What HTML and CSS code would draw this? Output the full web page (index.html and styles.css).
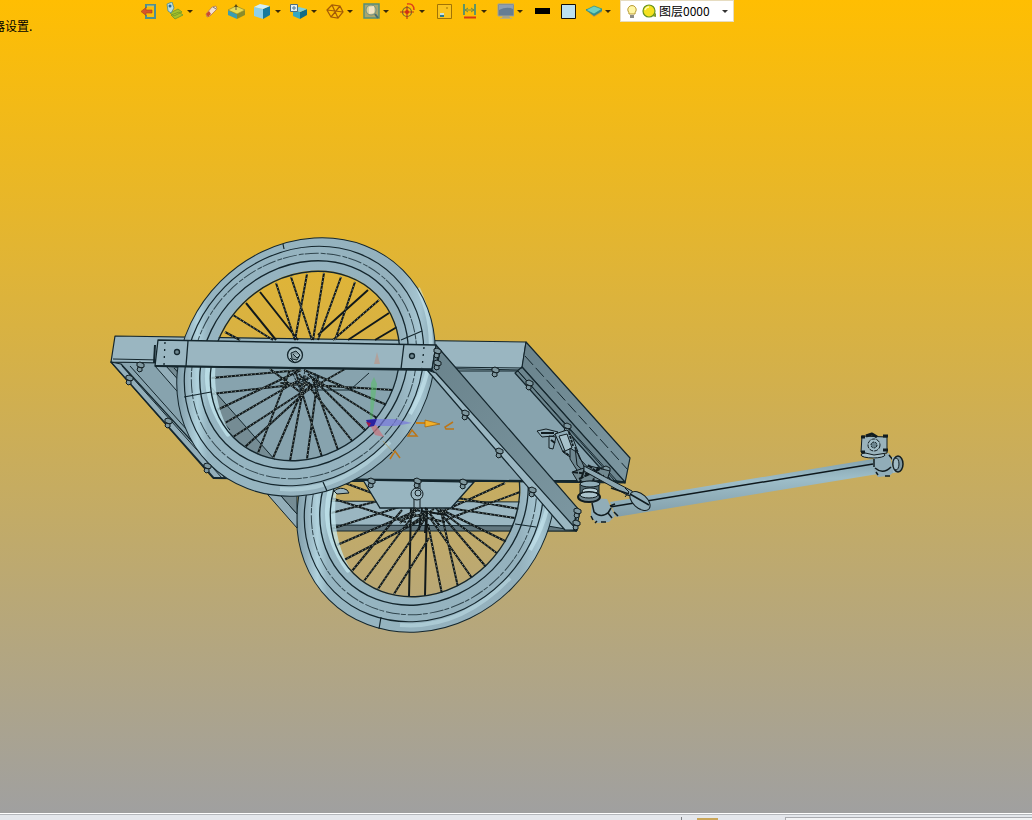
FILE: index.html
```
<!doctype html>
<html lang="zh-CN">
  <head>
    <title>图层0000</title>
    <meta charset="UTF-8">
    <meta name="viewport" content="width=device-width, initial-scale=1">
    <link rel="stylesheet" href="styles.css">
  </head>
  <body>
    <main class="viewport">
      <div class="toolbar">
        <button type="button" class="tool" aria-label="退出">
          <svg class="icon" viewBox="0 0 18 18"><path d="M6 6V3h9v13H6v-3" fill="none" stroke="#4f8f91" stroke-width="2"/><path d="M7 4h7" stroke="#b6c58a"/><path d="M1 9.500l5-4v2.500h6v3H6v2.500z" fill="#d8542a" stroke="#a8441a" stroke-width=".6"/></svg>
        </button>
        <button type="button" class="tool menu" aria-label="网格">
          <svg class="icon" viewBox="0 0 18 18"><path d="M5 13l8-3 4 3-8 4zM4 11l8-4 4 3-8 4z" fill="#a6c22b" stroke="#6f9429" stroke-width=".8"/><path d="M1 2l5-2 2 6-3 5-3-2z" fill="#b9dde2" stroke="#4b8b93" stroke-width=".8"/><circle cx="4" cy="4" r="1.500" fill="#2c6691"/></svg>
        </button>
        <button type="button" class="tool" aria-label="擦除">
          <svg class="icon" viewBox="0 0 18 18"><path d="M4 12l6-7 4-1 1 3-7 7-3 1z" fill="#f3dfcf" stroke="#b77c48" stroke-width=".8"/><path d="M4 12l3-3 2 3-3 3z" fill="#cb4b2b"/><path d="M11 5l3 2" stroke="#777"/></svg>
        </button>
        <button type="button" class="tool" aria-label="拉伸">
          <svg class="icon" viewBox="0 0 18 18"><path d="M0 8l9 4v5l-9-4z" fill="#3a9db2"/><path d="M9 12l8-4v5l-8 4z" fill="#8b8c2a"/><path d="M0 8l8-4 9 4-8 4z" fill="#e9dc52" stroke="#8b8a2c" stroke-width=".7"/><path d="M8 8V4" stroke="#555"/><path d="M8 2l-2 3h4z" fill="#5b4c12"/></svg>
        </button>
        <button type="button" class="tool menu" aria-label="着色">
          <svg class="icon" viewBox="0 0 18 18"><path d="M0 5l9 2v10l-9-3z" fill="#8ed0e9"/><path d="M9 7l7-3v9l-7 4z" fill="#17799c"/><path d="M0 5l6-3 10 2-7 3z" fill="#d2effa"/></svg>
        </button>
        <button type="button" class="tool menu" aria-label="视图">
          <svg class="icon" viewBox="0 0 18 18"><path d="M3 7l7 3v7l-7-3z" fill="#35a7c4"/><path d="M10 10l7-3v6l-7 4z" fill="#126c86"/><path d="M3 7l6-2 8 2-7 3z" fill="#7ed0dd"/><path d="M.500 2.500h7v7h-7z" fill="#e5f0f5" stroke="#4c6f81"/><path d="M4 4v4M2 6h4" stroke="#507d96"/></svg>
        </button>
        <button type="button" class="tool menu" aria-label="线框">
          <svg class="icon" viewBox="0 0 18 18"><path d="M1 8l5-5 8 1 3 6-5 6-7-1zM1 8l16 2M6 3l6 13M14 4L5 15M1 8l8 1" fill="none" stroke="#a35a07" stroke-width="1.200"/></svg>
        </button>
        <button type="button" class="tool menu" aria-label="缩放">
          <svg class="icon" viewBox="0 0 18 18"><path d="M2 2h15v14H2z" fill="#a9a66d" stroke="#568e7c" stroke-width="1.500"/><circle cx="9" cy="8" r="5" fill="#d7cf9b" stroke="#708f85"/><path d="M7 5l5-1v7l-5 1z" fill="#f2e2c2"/><path d="M13 12l3 4" stroke="#456b72" stroke-width="2"/></svg>
        </button>
        <button type="button" class="tool menu" aria-label="定位">
          <svg class="icon" viewBox="0 0 18 18"><circle cx="9" cy="10" r="4.500" fill="none" stroke="#6e6a32" stroke-width="1.200"/><path d="M2 10h14M9 4v13" stroke="#c13b16" stroke-width="1.200"/><circle cx="9" cy="10" r="2" fill="#d12d16"/><path d="M9 2q7-1 7 6" fill="none" stroke="#dc3d1b" stroke-width="1.500"/></svg>
        </button>
        <button type="button" class="tool" aria-label="窗口">
          <svg class="icon" viewBox="0 0 18 18"><path d="M3.500 2.500h14v14h-14z" fill="#fac31d" stroke="#a17305"/><path d="M6 11h4v4H6z" fill="#2e788c"/><path d="M6 11h4v2H6z" fill="#c9e1da"/><path d="M12 6h2" stroke="#a17305"/></svg>
        </button>
        <button type="button" class="tool menu" aria-label="标注">
          <svg class="icon" viewBox="0 0 18 18"><path d="M4 2v11M15 2v11" fill="none" stroke="#5f9468" stroke-width="2"/><path d="M5 8h9M8 6L5 8l3 2M11 6l3 2-3 2" fill="none" stroke="#6d8848"/><path d="M4 15.500h12" stroke="#d63b15" stroke-width="2"/></svg>
        </button>
        <button type="button" class="tool menu" aria-label="背景">
          <svg class="icon" viewBox="0 0 18 18"><path d="M2 2h16v12H2z" fill="#667d93" stroke="#a3a59a"/><path d="M3 8q8-4 14-1V3H3z" fill="#8f9fb0"/><path d="M7 14h6l2 3H5z" fill="#a7a387"/><path d="M4 16.500h12" stroke="#c0ae70"/></svg>
        </button>
        <button type="button" class="tool" aria-label="线色">
          <svg class="icon" viewBox="0 0 18 18"><path d="M3 6h15v6H3z" fill="#000"/></svg>
        </button>
        <button type="button" class="tool" aria-label="面色">
          <svg class="icon" viewBox="0 0 18 18"><path d="M3.500 2.500h14v14h-14z" fill="#bce0f0" stroke="#161006"/></svg>
        </button>
        <button type="button" class="tool menu" aria-label="图层管理">
          <svg class="icon" viewBox="0 0 18 18"><path d="M3 9l7 6 8-5v-3z" fill="#c99a3c"/><path d="M2 8l8 6 8-5V7H2z" fill="#338f8c"/><path d="M2 8l8 4 8-5-8-3z" fill="#6ed0bf" stroke="#298d85" stroke-width=".7"/></svg>
        </button>
        <label class="layer">
          <svg class="icon" viewBox="0 0 18 18"><path d="M6 12q0-2-1-3a4.200 4.200 0 1 1 8 0q-1 1-1 3z" fill="#fff6a5" stroke="#b79a34"/><path d="M7 13h4v3H7z" fill="#8d8d86"/></svg>
          <svg class="icon" viewBox="0 0 18 18"><circle cx="8" cy="9" r="6" fill="#f5e11f" stroke="#65931e" stroke-width="1.200"/><path d="M4 8q1-3 4-3" fill="none" stroke="#fffcae" stroke-width="1.500"/><path d="M11 14l4-3v4z" fill="#7d9a2a"/></svg>
          <select class="layer-select" aria-label="图层">
            <option>图层0000</option>
          </select>
        </label>
      </div>
      <p class="prompt">器设置.</p>

      <svg class="model" viewBox="0 40 1032 773" role="img" aria-label="拖车模型">
        <defs>
          <linearGradient id="tyre" x1="0" y1="0" x2="1" y2="0">
            <stop offset="0" stop-color="#7f9ca8"/>
            <stop offset=".04" stop-color="#96b3bf"/>
            <stop offset=".08" stop-color="#b0d2dd"/>
            <stop offset=".12" stop-color="#96b5c1"/>
            <stop offset=".86" stop-color="#94b1bd"/>
            <stop offset=".94" stop-color="#a6c6d2"/>
            <stop offset="1" stop-color="#86a5b1"/>
          </linearGradient>
          <linearGradient id="side" x1="0" y1="0" x2="1" y2="1">
            <stop offset="0" stop-color="#6a838c"/>
            <stop offset="1" stop-color="#7c97a1"/>
          </linearGradient>
          <linearGradient id="tube" x1="0" y1="0" x2=".15" y2="1">
            <stop offset="0" stop-color="#7897a3"/>
            <stop offset=".45" stop-color="#9dbdc8"/>
            <stop offset="1" stop-color="#819da8"/>
          </linearGradient>

          <!-- one wheel, hub at 306,367 -->
          <g id="wheel">
            <path fill="url(#tyre)" fill-rule="evenodd" d="M403 270A136 120 -45 0 1 209 464A136 120 -45 0 1 403 270zM377 294A101 88 -45 0 1 233 438A101 88 -45 0 1 377 294z"/>
            <path d="M210 355Q200 395 228 434Q208 400 214 355z" fill="#d0f1f7" stroke="#c4e8f0" stroke-width="5" stroke-linejoin="round" opacity=".75"/>
            <path d="M418 288Q447 350 410 414" fill="none" stroke="#c9e9f1" stroke-width="4" opacity=".6"/>
            <path d="M280 489Q340 494 390 442" fill="none" stroke="#c2e1ea" stroke-width="4" opacity=".5"/>
            <g fill="none" stroke="#14262d">
              <ellipse cx="306" cy="367" rx="137" ry="121" transform="rotate(-45 306 367)"/>
              <ellipse cx="304" cy="366" rx="127" ry="112" transform="rotate(-45 304 366)" stroke-width="1.200"/>
              <ellipse cx="304" cy="366" rx="119" ry="106" transform="rotate(-45 304 366)" stroke="#32474f" stroke-dasharray="14 2 5 1"/>
              <ellipse cx="304" cy="365" rx="111" ry="97" transform="rotate(-45 304 365)" stroke-width="1.300"/>
              <ellipse cx="305" cy="366" rx="101" ry="88" transform="rotate(-45 305 366)" stroke-width="1.300"/>
            </g>
          </g>

          <g id="bolt" fill="#7e979f" stroke="#111c20">
            <path d="M-3-3l3-1 4 2v3l-3 1-4-2z"/>
            <path d="M-2 1l4 1v3l-3 1-2-2z"/>
          </g>
        </defs>

        <!-- rear cross beam -->
        <g stroke="#14262d" stroke-linejoin="round">
          <path d="M300 501L536 502 577 526V531L320 530z" fill="#9ab6c1"/>
          <path d="M325 525L548 526 577 531H330z" fill="#62777f"/>
        </g>

        <!-- lower wheel -->
        <path class="spoke" d="M331 513l59-15M331 529l93-30M337 545l81-35M344 560l83-43M352 571l50-61M364 581l51-68M378 589l49-73M394 594l35-56M409 597l2-91M425 596l2-90M442 594l-14-70M458 587l-18-80M472 578l-42-60M487 568l-52-61M498 554l-57-43M507 542l-65-32M515 518l-80-12M520 492l-75 28M519 509l-100-18M331 498l75 24M345 483l75 28M505 483l-68 31"/>
        <path class="twist" d="M331 513l59-15M331 529l93-30M337 545l81-35M344 560l83-43M352 571l50-61M364 581l51-68M378 589l49-73M394 594l35-56M442 594l-14-70M458 587l-18-80M472 578l-42-60M487 568l-52-61M498 554l-57-43M507 542l-65-32M515 518l-80-12M520 492l-75 28M519 509l-100-18M331 498l75 24M345 483l75 28M505 483l-68 31"/>
        <use href="#wheel" x="120" y="136"/>
        <path d="M381 617l-2 12M515 524l21 3" fill="none" stroke="#14262d" stroke-width="1.200"/>

        <!-- platform -->
        <g stroke="#14262d" stroke-linejoin="round" stroke-width="1.200">
          <path d="M111 362L522 367 625 483 213 478z" fill="#87a3ae"/>
          <path d="M115 336L526 342 522 370 111 362z" fill="#9ab6c1"/>
          <path d="M526 342L630 458 625 483 522 367z" fill="url(#side)"/>
          <path d="M111 362l103 116 12 .500L121 364z" fill="#93aeb9"/>
          <path d="M522 367l103 115-14-2L515 373z" fill="#6c858e"/>
          <path d="M440 367l82 1M440 371h78l96 109M518 371L617 481M113 359l48 1" fill="none" stroke-width="1"/>
          <path d="M525 356L628 470" fill="none" stroke-dasharray="12 4" stroke-width="1"/>
          <path d="M213 478l412 4M350 481h240" fill="none" stroke-width="2"/>
        </g>

        <!-- hub bracket -->
        <path d="M363 480L474 482 451 508H380z" fill="#98b5c0" stroke="#14262d" stroke-width="1.300"/>
        <g fill="#9bb5bf" stroke="#111c20">
          <path d="M415 484h5v6h-5zM414 499h6v9h-6z"/>
          <circle cx="417" cy="494" r="6"/>
          <circle cx="418" cy="493" r="3"/>
          <path d="M334 491q6-5 13-1l2 3-12 1z"/>
        </g>
        <path class="spoke" d="M400 523l16-15M408 526l26-17M419 530l3-22M440 526l-15-18M410 514l35 8M433 511l-32 9M447 515l-26-4M427 509l-2 24"/>
        <path class="twist" d="M400 523l16-15M408 526l26-17M440 526l-15-18M410 514l35 8M433 511l-32 9"/>

        <!-- left rail -->
        <g stroke="#14262d" stroke-linejoin="round">
          <path d="M155 366H167L297 514V528z" fill="#93aeb9"/>
          <path d="M166 366L195 369 297 485V514z" fill="#758c94"/>
          <path d="M174 368L230 430M122 366L222 478M130 366l100 112" fill="none"/>
        </g>

        <!-- upper wheel -->
        <path class="spoke" d="M225 332l15 8M233 315l40 25M246 303l30 37M260 292l38 48M276 283l19 57M291 277l21 63M307 274l-12 66M324 273l-11 67M341 277l-23 63M355 282l-20 58M368 290l-50 45M379 300l-46 40M389 313l-41 27M397 327l-22 13M211 378l89-8M211 394l99-11M217 410l84-40M225 423l81-47M233 437l77-50M245 447l68-62M258 453l32-83M273 458l35-81M290 461l15-83M307 459l11-82M322 457l-26-84M338 450l-26-73M353 442l-54-68M367 432l-59-58M377 418l-64-40M387 405l-83-35M393 390l-113-7M270 369l30 23M345 369l-40 23"/>
        <path class="twist" d="M225 332l15 8M233 315l40 25M276 283l19 57M291 277l21 63M307 274l-12 66M324 273l-11 67M341 277l-23 63M355 282l-20 58M379 300l-46 40M211 378l89-8M211 394l99-11M217 410l84-40M225 423l81-47M233 437l77-50M245 447l68-62M258 453l32-83M273 458l35-81M290 461l15-83M307 459l11-82M322 457l-26-84M338 450l-26-73M353 442l-54-68M367 432l-59-58M377 418l-64-40M387 405l-83-35M393 390l-113-7M270 369l30 23M345 369l-40 23"/>
        <path d="M293 374l8 18M305 371l-5 21M315 373l3 17M296 384l22-9M298 378l22 10" fill="none" stroke="#17262c" stroke-dasharray="3 1"/>
        <path d="M313 390h37l19-17" fill="none" stroke="#14262d"/>
        <use href="#wheel"/>
        <path d="M184 397l27-5M323 482l4 9M401 340l21-9M283 244l1 5" fill="none" stroke="#14262d" stroke-width="1.200"/>

        <!-- front cross beam -->
        <g stroke="#14262d" stroke-linejoin="round" stroke-width="1.300">
          <path d="M158 340L436 345 432 369 155 366z" fill="#9ab6c1"/>
          <path d="M155 366l277 4" stroke-width="2"/>
          <path d="M188 341l-2 25M404 344l-3 25" fill="none"/>
          <path d="M165 342l-1 23M424 347l-2 21" fill="none" stroke-dasharray="2 5"/>
          <circle cx="177" cy="352" r="2.500" fill="#718992"/>
          <circle cx="412" cy="356" r="2.500" fill="#718992"/>
          <circle cx="295" cy="355" r="7.500" fill="#a5bdc5"/>
          <path d="M291 353l5-2 4 4-3 5-5-1zM293 354l4 4 3-3M290 358l4 4" fill="#82979e" stroke-width="1"/>
        </g>

        <!-- right rail -->
        <g stroke="#14262d" stroke-linejoin="round" stroke-width="1.200">
          <path d="M436 345L580 511 576 531 432 370z" fill="url(#side)"/>
          <path d="M427 370L436 373 577 530H565z" fill="#9ab6c1"/>
          <path d="M436 349l3 5-3 16M577 508l-3 22" fill="none" stroke-width="2"/>
        </g>
        <use href="#bolt" x="437" y="352"/>
        <use href="#bolt" x="437" y="364"/>
        <use href="#bolt" x="465" y="414"/>
        <use href="#bolt" x="499" y="452"/>
        <use href="#bolt" x="532" y="491"/>
        <use href="#bolt" x="577" y="512"/>
        <use href="#bolt" x="576" y="524"/>
        <use href="#bolt" x="495" y="371"/>
        <use href="#bolt" x="529" y="384"/>
        <use href="#bolt" x="567" y="427"/>
        <use href="#bolt" x="606" y="470"/>
        <use href="#bolt" x="140" y="366"/>
        <use href="#bolt" x="129" y="379"/>
        <use href="#bolt" x="168" y="422"/>
        <use href="#bolt" x="207" y="467"/>
        <use href="#bolt" x="371" y="482"/>
        <use href="#bolt" x="417" y="482"/>
        <use href="#bolt" x="463" y="483"/>
        <path d="M155 345l-1 18" fill="none" stroke="#14262d" stroke-width="2"/>

        <!-- draw bar -->
        <path d="M610 502L873 459 878 474 616 517z" fill="url(#tube)"/>
        <path d="M610 507L873 464" fill="none" stroke="#0e181c" stroke-width="1.500"/>
        <g stroke="#111c20" fill="#91adb8" stroke-linejoin="round">
          <path d="M592 498l15 1 8 17-6 6-12 1-6-6z" stroke="none"/>
          <path d="M592 503l2 9q7 7 15 0M591 516l2 4M597 521l-2 2M601 522h5M611 508l-3 5 4 5M610 506l5-2M614 512l4 4" fill="none" stroke-width="1.500"/>
          <path d="M537 431l9-2 12 3-5 4-11 1zM549 436l7 1-3 12-4-1z"/>
          <path d="M541 433h13M551 440l4 3" fill="none" stroke-width="2"/>
          <path d="M555 434l12-4 5 6 6 16-8 5-7-5z"/>
          <path d="M559 436l8-2 5 14-7 3z" fill="#a8c2cb"/>
          <path d="M569 432l4 14M563 451l8 6 6-5" fill="none" stroke-width="2" stroke-dasharray="3 1"/>
          <path d="M570 448l8 5 8 18-6 4-10-16zM575 447l5 12 16 17-3 4-16-15z" fill="#6f8790"/>
          <path d="M572 472l18-6 20 5-3 9-29 2z" fill="#71888f"/>
          <path d="M573 472l31 4M579 479l23-11M588 465l19 15M585 468l-5 14M598 467l-5 14" fill="none" stroke-width="2" stroke-dasharray="5 1"/>
          <path d="M584 466l48 25 3 6-8-2-43-24z" fill="#8ca6b0"/>
          <path d="M580 484h19v10h-19z" fill="#536970"/>
          <ellipse cx="590" cy="484" rx="10" ry="3"/>
          <ellipse cx="590" cy="491" rx="8" ry="3" fill="#b9d0d7"/>
          <ellipse cx="589" cy="497" rx="11" ry="5" fill="#718790" stroke-width="2"/>
          <ellipse cx="589" cy="495" rx="9" ry="3" fill="#aac3cc"/>
          <ellipse cx="640" cy="501" rx="12" ry="7" transform="rotate(42 640 501)"/>
          <path d="M630 494l19 11M611 488l18 6" stroke-width="1.500"/>
          <path d="M625 488l4 4-4 5" fill="none"/>
        </g>

        <!-- hitch plate -->
        <g stroke="#111c20" fill="#91adb8" stroke-linejoin="round">
          <path d="M874 457l15-4 5 19-5 4-11 1-4-6z" stroke="none"/>
          <path d="M875 468q8 7 16-1M878 475l-2-3M885 476h5M874 459v8M889 455l4 5" fill="none" stroke-width="1.500"/>
          <path d="M892 457l6-1 1 16-6 1z" fill="#a0bac4" stroke="none"/>
          <ellipse cx="898" cy="464" rx="5" ry="8" fill="#7f98a1" stroke-width="1.500"/>
          <ellipse cx="896" cy="464" rx="3" ry="6" fill="#a0bac4"/>
          <ellipse cx="873" cy="455" rx="12" ry="3" fill="#a8c1c9"/>
          <path d="M862 436l25 1v16l-13 2-13-3z" fill="#9ab3bc"/>
          <circle cx="874" cy="445" r="6" fill="#a3bdc6" stroke-dasharray="4 1"/>
          <circle cx="874" cy="445" r="3" fill="#6c858e" stroke-dasharray="2 1"/>
          <path d="M861 437h4M861 452h4M883 450h5M883 436h5M866 436l6-2 5 3" fill="none" stroke-width="3"/>
        </g>

        <!-- axis triad -->
        <path d="M370 420l1-37 3-6 3 7-5 36z" fill="#58bf68" opacity=".55"/>
        <path d="M374 364l3-12 3 12z" fill="#bd9687" opacity=".65"/>
        <path d="M370 419h25l17 4-17 3h-25z" fill="#7778dd" opacity=".7"/>
        <path d="M370 425l6 0 8 12-9-2z" fill="#c67780" opacity=".75"/>
        <path d="M366 420l11-1-3 7-5 1z" fill="#2a22a0"/>
        <path d="M366 422l5 1-2 4z" fill="#a41b44"/>
        <path d="M416 423h10" stroke="#c98216" stroke-width="2"/>
        <path d="M425 420l15 4-15 3z" fill="#f2b12a" stroke="#a1620a" stroke-width=".7"/>
        <path d="M453 422l-8 5 1 2h8M408 436l4-6 5 6zM390 459l5-8 5 7" fill="none" stroke="#bd7516" stroke-width="1.500"/>
        <path d="M383 441l11 12" stroke="#a7a177"/>
      </svg>
    </main>

    <footer class="status">
      <span class="status-text"></span>
      <span class="status-mark"></span>
      <span class="status-field"></span>
    </footer>
  </body>
</html>
```

FILE: styles.css
```
body {
  margin: 0;
  min-height: 100vh;
  display: flex;
  flex-direction: column;
  overflow-x: hidden;
  font-family: "Noto Sans CJK SC", sans-serif;
  font-size: 12px;
  color: #000;
}

.viewport {
  flex: 1;
  display: flex;
  flex-direction: column;
  background: linear-gradient(#ffbe02, #a0a0a0);
}

.toolbar {
  display: flex;
  align-items: center;
  gap: 8px;
  height: 22px;
  padding-left: 140px;
}

.tool {
  display: flex;
  align-items: center;
  flex: none;
  width: 18px;
  height: 20px;
  padding: 0;
  border: 0;
  background: none;
}
.tool.menu {
  width: 28px;
}
.tool.menu::after {
  content: "";
  margin-left: 3px;
  border: 3px solid transparent;
  border-top-color: #3a2a08;
  border-bottom: 0;
}

.icon {
  flex: none;
  width: 18px;
  height: 18px;
}

.layer {
  display: flex;
  align-items: center;
  flex: none;
  box-sizing: border-box;
  width: 114px;
  height: 22px;
  padding: 0 5px 0 2px;
  border: 1px solid #e6dcc0;
  background: #fff;
}
.layer::after {
  content: "";
  border: 3px solid transparent;
  border-top-color: #333;
  border-bottom: 0;
}
.layer-select {
  flex: 1;
  min-width: 0;
  padding: 0;
  border: 0;
  background: none;
  appearance: none;
  font: inherit;
  line-height: 16px;
  color: inherit;
}

.prompt {
  margin: 0 0 0 -7px;
  height: 18px;
  line-height: 8px;
}

.model {
  display: block;
  width: 100%;
  flex: 1;
  min-height: 0;
}

.spoke {
  fill: none;
  stroke: #11191b;
  stroke-width: 2;
}
.twist {
  fill: none;
  stroke: #9aa79f;
  stroke-width: 1;
  stroke-dasharray: 1 3;
}

.status {
  display: flex;
  align-items: flex-end;
  height: 5px;
  border-top: 1px solid #fff;
  background: #e4e7ec;
  box-shadow: inset 0 1px #b4b7bb;
  padding-top: 1px;
}
.status-text {
  flex: 0 0 66%;
  height: 3px;
  border-right: 1px solid #7d8084;
}
.status-mark {
  width: 21px;
  height: 2px;
  margin: 0 67px 0 15px;
  background: #c9a659;
}
.status-field {
  flex: 1;
  height: 2px;
  border-top: 1px solid #a9abb0;
  border-left: 1px solid #a9abb0;
  background: #f2f3f5;
}
```
